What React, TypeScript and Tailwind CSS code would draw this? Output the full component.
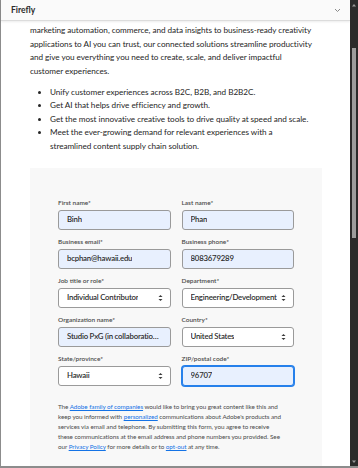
import type { ReactNode } from 'react';

type FieldProps = {
  label: string;
  value: string;
  kind?: 'autofill' | 'select' | 'focus';
};

const UpDown = (): JSX.Element => (
  <svg width="5" height="8" viewBox="0 0 5 8" className="shrink-0">
    <path d="M0.5 3 L2.5 1 L4.5 3 Z" fill="#3a3a3a" />
    <path d="M0.5 5 L2.5 7 L4.5 5 Z" fill="#3a3a3a" />
  </svg>
);

const Field = ({ label, value, kind = 'autofill' }: FieldProps): JSX.Element => {
  const box =
    kind === 'select'
      ? 'border border-[#9a9a9a] bg-white'
      : kind === 'focus'
        ? 'border border-[#2680eb] bg-[#e8f0fe] ring-1 ring-[#2680eb]'
        : 'border border-[#9a9a9a] bg-[#e8f0fe]';
  return (
    <div className="flex min-w-0 flex-col">
      <span className="h-[9px] text-[6.5px] leading-[9px] font-semibold text-[#4b4b4b]">{label}</span>
      <div className={`mt-[3px] flex h-[20px] items-center justify-between gap-[3px] rounded-[3px] pl-[8px] pr-[7px] ${box}`}>
        <span className="min-w-0 truncate text-[7.8px] font-semibold tracking-[-0.2px] text-[#2c2c2c]">{value}</span>
        {kind === 'select' ? <UpDown /> : null}
      </div>
    </div>
  );
};

const A = ({ children }: { children: ReactNode }): JSX.Element => (
  <span className="text-[#1473e6] underline">{children}</span>
);

export default function App(): JSX.Element {
  return (
    <div
      className="flex h-[468px] w-[358px] flex-col overflow-hidden bg-[#8c8c8c]"
      style={{ fontFamily: 'Lato, "Noto Sans", sans-serif' }}
    >
      <div className="flex min-h-0 flex-1 pl-[1px]">
        {/* panel */}
        <div className="flex min-w-0 flex-1 flex-col bg-white">
          <div className="flex h-[21px] shrink-0 items-center justify-between border-b border-[#dcdcdc] bg-[#fafafa] pl-[10px] pr-[9px] shadow-[0_1px_2px_rgba(0,0,0,0.08)]">
            <span className="text-[8.5px] font-bold text-[#2c2c2c]">Firefly</span>
            <svg width="7" height="5" viewBox="0 0 7 5">
              <path d="M1 1 L3.5 3.5 L6 1" stroke="#8a8a8a" strokeWidth="1" fill="none" />
            </svg>
          </div>

          <div className="min-h-0 flex-1 overflow-hidden pl-[29px] pr-[28px] text-[#262626]">
            <p className="whitespace-nowrap pt-[3px] text-[8.2px] leading-[13.5px] tracking-[-0.05px]">
              marketing automation, commerce, and data insights to business-ready creativity
              <br />
              applications to AI you can trust, our connected solutions streamline productivity
              <br />
              and give you everything you need to create, scale, and deliver impactful
              <br />
              customer experiences.
            </p>
            <ul className="mt-[8px] list-disc whitespace-nowrap pl-[20px] text-[8.2px] leading-[13.4px] tracking-[-0.05px] marker:text-[8px]">
              <li>Unify customer experiences across B2C, B2B, and B2B2C.</li>
              <li>Get AI that helps drive efficiency and growth.</li>
              <li>Get the most innovative creative tools to drive quality at speed and scale.</li>
              <li>
                Meet the ever-growing demand for relevant experiences with a
                <br />
                streamlined content supply chain solution.
              </li>
            </ul>

            <div className="mt-[15px] bg-[#f8f8f8] px-[28px] pb-[20px] pt-[30px]">
              <div className="grid grid-cols-2 gap-x-[11px] gap-y-[7px]">
                <Field label="First name*" value="Binh" />
                <Field label="Last name*" value="Phan" />
                <Field label="Business email*" value="bcphan@hawaii.edu" />
                <Field label="Business phone*" value="8083679289" />
                <Field label="Job title or role*" value="Individual Contributor" kind="select" />
                <Field label="Department*" value="Engineering/Development" kind="select" />
                <Field label="Organization name*" value="Studio PxG (in collaboration with UH)" />
                <Field label="Country*" value="United States" kind="select" />
                <Field label="State/province*" value="Hawaii" kind="select" />
                <Field label="ZIP/postal code*" value="96707" kind="focus" />
              </div>
              <p className="mt-[16px] whitespace-nowrap text-[6.3px] leading-[10px] tracking-[-0.05px] text-[#4b4b4b]">
                The <A>Adobe family of companies</A> would like to bring you great content like this and
                <br />
                keep you informed with <A>personalized</A> communications about Adobe&apos;s products and
                <br />
                services via email and telephone. By submitting this form, you agree to receive
                <br />
                these communications at the email address and phone numbers you provided. See
                <br />
                our <A>Privacy Policy</A> for more details or to <A>opt-out</A> at any time.
              </p>
            </div>
          </div>
        </div>

        {/* scrollbar */}
        <div className="flex w-[8px] shrink-0 flex-col items-center bg-[#2b2b2b]">
          <svg width="6" height="6" viewBox="0 0 6 6" className="mt-[2px]">
            <path d="M1 4.5 L3 2 L5 4.5 Z" fill="#9a9a9a" />
          </svg>
          <div className="mt-[40px] h-[190px] w-[4px] bg-[#9d9d9d]" />
          <div className="flex-1" />
          <svg width="6" height="6" viewBox="0 0 6 6" className="mb-[1px]">
            <path d="M1 1.5 L3 4 L5 1.5 Z" fill="#9a9a9a" />
          </svg>
        </div>
      </div>
      <div className="h-[2px] shrink-0" />
    </div>
  );
}
